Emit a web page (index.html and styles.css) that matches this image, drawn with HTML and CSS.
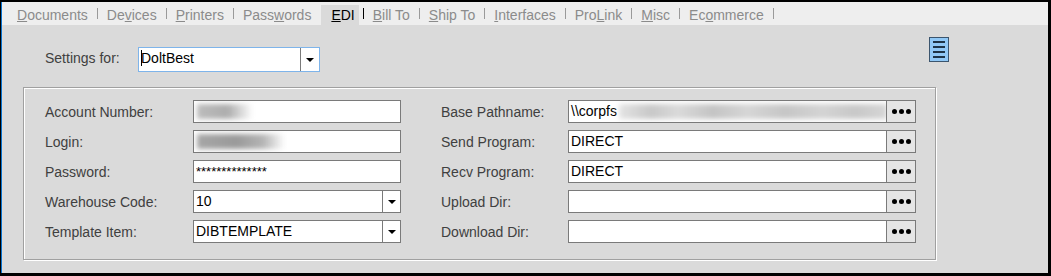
FILE: index.html
```html
<!DOCTYPE html>
<html lang="en">
<head>
  <meta charset="UTF-8" />
  <title>EDI Settings</title>
  <link rel="stylesheet" href="styles.css">
</head>
<body>
  <div class="window">
    <div class="tabs">
      <span class="tab"><u>D</u>ocuments</span><span class="sep"></span>
      <span class="tab">De<u>v</u>ices</span><span class="sep"></span>
      <span class="tab"><u>P</u>rinters</span><span class="sep"></span>
      <span class="tab">Pass<u>w</u>ords</span>
      <span class="tab active"><u>E</u>DI</span><span class="sep dark"></span>
      <span class="tab"><u>B</u>ill To</span><span class="sep"></span>
      <span class="tab"><u>S</u>hip To</span><span class="sep"></span>
      <span class="tab"><u>I</u>nterfaces</span><span class="sep"></span>
      <span class="tab">Pro<u>L</u>ink</span><span class="sep"></span>
      <span class="tab"><u>M</u>isc</span><span class="sep"></span>
      <span class="tab">Ec<u>o</u>mmerce</span><span class="sep"></span>
    </div>

    <div class="content">
      <div class="settings-row">
        <span class="settings-label">Settings for:</span>
        <div class="combo settings-combo">
          <span class="value"><i class="caret"></i>DoltBest</span>
          <span class="drop"><i class="arrow"></i></span>
        </div>
        <svg class="menu-icon" width="20" height="25" viewBox="0 0 20 25">
          <rect x="0.5" y="0.5" width="19" height="24" fill="#90c8f6" stroke="#3b556e"/>
          <g fill="#1e3448">
            <rect x="4" y="4" width="12" height="2"/>
            <rect x="4" y="9" width="12" height="2"/>
            <rect x="4" y="14" width="12" height="2"/>
            <rect x="4" y="19" width="12" height="2"/>
          </g>
        </svg>
      </div>

      <div class="group">
        <div class="col left">
          <span class="label">Account Number:</span>
          <div class="input"><span class="value"><i class="blur blur-account"></i></span></div>

          <span class="label">Login:</span>
          <div class="input"><span class="value"><i class="blur blur-login"></i></span></div>

          <span class="label">Password:</span>
          <div class="input"><span class="value password">**************</span></div>

          <span class="label">Warehouse Code:</span>
          <div class="combo">
            <span class="value">10</span>
            <span class="drop"><i class="arrow"></i></span>
          </div>

          <span class="label">Template Item:</span>
          <div class="combo">
            <span class="value">DIBTEMPLATE</span>
            <span class="drop"><i class="arrow"></i></span>
          </div>
        </div>

        <div class="col right">
          <span class="label">Base Pathname:</span>
          <div class="input path">
            <span class="value">\\corpfs<i class="blur blur-path"></i></span>
            <span class="browse"><i></i><i></i><i></i></span>
          </div>

          <span class="label">Send Program:</span>
          <div class="input path">
            <span class="value">DIRECT</span>
            <span class="browse"><i></i><i></i><i></i></span>
          </div>

          <span class="label">Recv Program:</span>
          <div class="input path">
            <span class="value">DIRECT</span>
            <span class="browse"><i></i><i></i><i></i></span>
          </div>

          <span class="label">Upload Dir:</span>
          <div class="input path">
            <span class="value"></span>
            <span class="browse"><i></i><i></i><i></i></span>
          </div>

          <span class="label">Download Dir:</span>
          <div class="input path">
            <span class="value"></span>
            <span class="browse"><i></i><i></i><i></i></span>
          </div>
        </div>
      </div>
    </div>
  </div>
</body>
</html>
```

FILE: styles.css
```css
body {
  margin: 0;
  height: 276px;
  overflow: hidden;
  background: #000;
  font-family: "Liberation Sans", Arial, sans-serif;
  font-size: 14px;
}

.window {
  margin: 2px 3px 0 1px;
  height: 271px;
  border-left: 1px solid #0a74d0;
  background: #dadada;
  display: flex;
  flex-direction: column;
}

/* tab strip */
.tabs {
  flex: none;
  height: 23px;
  background: #eeeeee;
  display: flex;
  align-items: flex-end;
  padding-left: 6px;
  color: #8b8b8b;
}

.tab {
  height: 20px;
  line-height: 20px;
  padding: 0 9px;
  white-space: nowrap;
}

.tab.active {
  background: #dadada;
  color: #000;
  padding: 0 4px 0 10px;
  margin: 0 4px 0 1px;
}

.sep {
  align-self: flex-start;
  margin-top: 6px;
  width: 1px;
  height: 11px;
  background: #9a9a9a;
}

.sep.dark {
  background: #000;
}

/* page body */
.content {
  padding: 12px 0 0 21px;
}

.settings-row {
  display: flex;
  align-items: flex-start;
  width: 926px;
  box-sizing: border-box;
  padding-left: 22px;
}

.settings-label {
  width: 93px;
  margin-top: 10px;
  line-height: 22px;
  color: #404040;
}

.menu-icon {
  margin-left: auto;
  display: block;
}

.group {
  margin-top: 15px;
  width: 913px;
  height: 173px;
  box-sizing: border-box;
  border: 1px solid #a0a0a0;
  box-shadow: inset 1px 1px 0 #fff, 1px 1px 0 #fff;
  padding: 12px 0 0 21px;
  display: flex;
  gap: 40px;
}

.col {
  display: grid;
  grid-auto-rows: 23px;
  row-gap: 7px;
  align-items: center;
}

.col.left {
  grid-template-columns: 148px 208px;
}

.col.right {
  grid-template-columns: 127px 348px;
}

.label {
  color: #404040;
  white-space: nowrap;
}

/* inputs */
.input, .combo {
  display: flex;
  height: 23px;
  box-sizing: border-box;
  border: 1px solid #7a7a7a;
  background: #fff;
  overflow: hidden;
}

.value {
  flex: 1;
  padding-left: 2px;
  line-height: 21px;
  color: #000;
  white-space: nowrap;
  overflow: hidden;
}

.value.password {
  font-size: 13px;
}

.settings-combo {
  width: 182px;
  height: 25px;
  margin-top: 10px;
  border-color: #7eb4ea;
}

.settings-combo .value {
  line-height: 20px;
}

.caret {
  display: inline-block;
  width: 1px;
  height: 16px;
  margin-right: -1px;
  background: #000;
  vertical-align: -3px;
}

.drop {
  width: 17px;
  flex: none;
  border-left: 1px solid #7a7a7a;
  display: flex;
  align-items: center;
  justify-content: center;
}

.settings-combo .drop {
  width: 18px;
}

.arrow {
  width: 0;
  height: 0;
  border-left: 4px solid transparent;
  border-right: 4px solid transparent;
  border-top: 4px solid #000;
}

.browse {
  width: 28px;
  flex: none;
  border-left: 1px solid #7a7a7a;
  background: #e5e5e5;
  display: flex;
  align-items: center;
  justify-content: center;
  gap: 2px;
}

.browse i {
  width: 5px;
  height: 5px;
  border-radius: 50%;
  background: #000;
}

/* masked values */
.blur {
  display: inline-block;
  height: 15px;
  vertical-align: -3px;
  filter: blur(2.5px);
}

.blur-account {
  width: 56px;
  margin-left: 1px;
  background: linear-gradient(90deg, #bcbcbc, #adadad 55%, rgba(210, 210, 210, 0));
}

.blur-login {
  width: 88px;
  margin-left: 1px;
  background: linear-gradient(90deg, #a6a6a6, #9a9a9a 45%, #b4b4b4 75%, rgba(230, 230, 230, 0));
}

.blur-path {
  width: 268px;
  margin-left: 2px;
  background: linear-gradient(90deg, #e4e4e4, #c8c8c8 12%, #dadada 22%, #c4c4c4 35%, #d6d6d6 48%, #c6c6c6 62%, #d4d4d4 76%, #c8c8c8 88%, #d6d6d6);
}
```
